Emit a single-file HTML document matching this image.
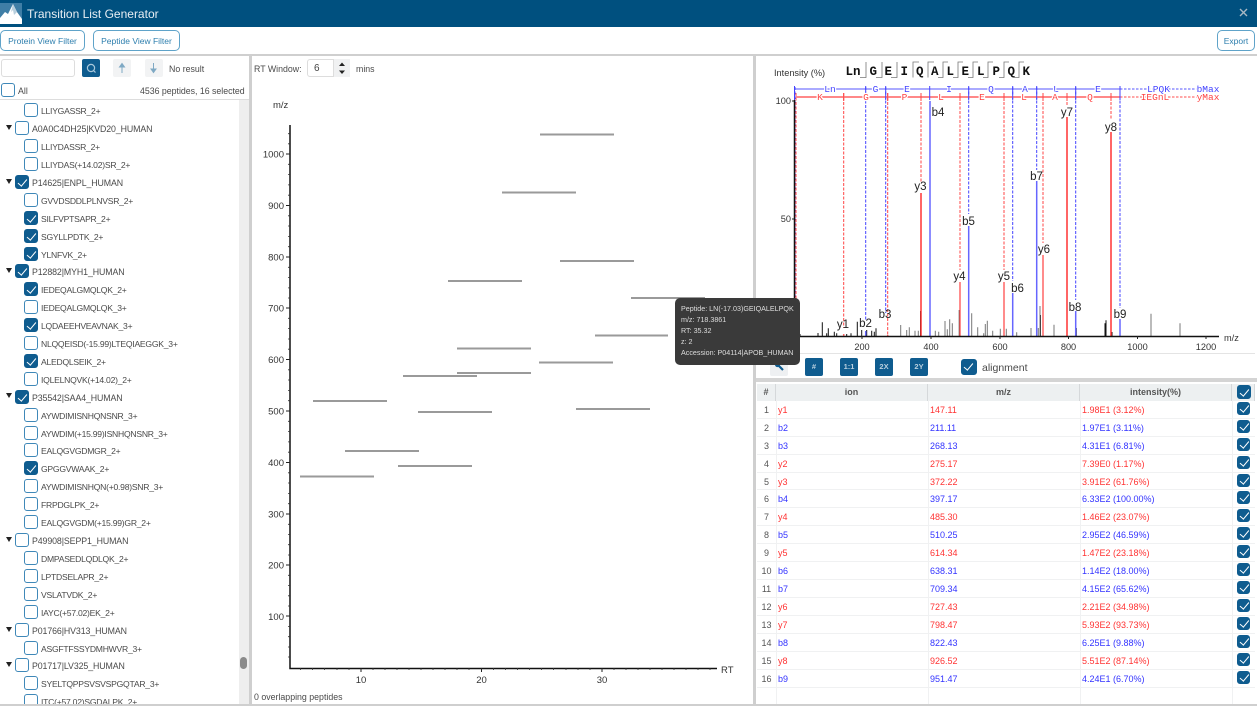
<!DOCTYPE html>
<html lang="en"><head><meta charset="utf-8"><title>Transition List Generator</title>
<style>
html,body{margin:0;padding:0;width:1257px;height:706px;overflow:hidden;background:#fff;font-family:"Liberation Sans",sans-serif;font-size:8.8px;color:#444}
#w{position:relative;width:1257px;height:706px;overflow:hidden}
div{box-sizing:border-box}
.a{position:absolute;white-space:nowrap}
.bar{left:0;top:0;width:1257px;height:27px;background:#00507f;color:#e8eef3;font-size:12px;line-height:28px;padding-left:27px;position:absolute}
.btn{position:absolute;top:30px;height:21px;border:1px solid #5fa3c9;border-radius:5px;color:#2e7fae;line-height:20px;text-align:center;background:#fff;font-size:8.5px}
.g{position:absolute;background:#cfcfcf}
.r{position:absolute;height:18px;line-height:20px;white-space:nowrap;color:#4a4a4a}
.p{left:32px;font-size:8.8px;letter-spacing:-.1px}.s{left:41px;font-size:8.6px;letter-spacing:-.25px}
.c{position:absolute;width:14px;height:14px;border:1px solid #3f88b8;border-radius:3px;background:#fff}
.k{background:#0f5c8f;border-color:#0f5c8f}
.k:after{content:"";position:absolute;left:4px;top:0.5px;width:3.5px;height:8px;border:solid #fff;border-width:0 1.5px 1.5px 0;transform:rotate(40deg)}
.cp{left:15px}.cs{left:24px}
.t{position:absolute;left:6px;width:0;height:0;border-left:3px solid transparent;border-right:3px solid transparent;border-top:5px solid #222}
.ib{position:absolute;top:358px;width:18px;height:18px;background:#0f5c8f;border-radius:2px;color:#b9d0df;font-size:7.5px;font-weight:bold;line-height:18px;text-align:center}
.th{position:absolute;top:384px;height:17px;background:#edf0f1;border-right:1px solid #d5d8da;text-align:center;line-height:17px;color:#555;font-weight:bold;font-size:9px}
.n,.i,.m,.v{position:absolute;height:18px;line-height:20px;white-space:nowrap;font-size:9px}
.n{left:757px;width:19px;text-align:center;color:#555}
.i{left:778px}.m{left:930px}.v{left:1082px}
.R{color:#f33}.B{color:#33f}
.l{position:absolute;left:757px;width:498px;height:1px;background:#f0f1f2}
.tc{left:1237px;width:13px;height:13px}
.tc.k:after{left:3.5px;top:0}
.tip{position:absolute;left:675px;top:298px;width:125px;height:67px;background:#3a3a3a;border-radius:5px;color:#ddd;font-size:7.15px;padding:6px 6px;line-height:11.1px;white-space:nowrap}
</style></head><body><div id="w">
<div class="bar">Transition List Generator</div>
<svg class="a" style="left:0;top:3px" width="22" height="21" viewBox="0 0 22 21"><rect width="22" height="21" fill="#3f7ea6"/><path d="M0 21V15L5 9 8 11 13 1 17 9 22 16V21Z" fill="#fff"/><path d="M13 1 11 9 13 7 14 12 17 9Z" fill="#b9cfdd"/></svg>
<svg class="a" style="left:1239px;top:8px" width="9" height="9"><path d="M1 1 8 8M8 1 1 8" stroke="#a9b9c4" stroke-width="1.4"/></svg>
<div class="btn" style="left:0;width:85px">Protein View Filter</div>
<div class="btn" style="left:93px;width:87px">Peptide View Filter</div>
<div class="btn" style="left:1217px;width:38px">Export</div>

<div class="g" style="left:0;top:54px;width:1257px;height:2px"></div>
<div class="g" style="left:249px;top:56px;width:3px;height:648px"></div>
<div class="g" style="left:753px;top:56px;width:3px;height:648px"></div>
<div class="g" style="left:756px;top:378px;width:501px;height:4px;background:#d4d4d4"></div>

<!-- left header -->
<div class="a" style="left:1px;top:59px;width:74px;height:18px;border:1px solid #ddd;border-radius:3px"></div>
<div class="a" style="left:82px;top:59px;width:18px;height:18px;background:#0f5c8f;border-radius:2px"></div>
<svg class="a" style="left:85px;top:62px" width="12" height="12"><circle cx="6" cy="6" r="3.6" fill="none" stroke="#a9c8dc" stroke-width="1.2"/><path d="M8.6 8.6 10.5 10.5" stroke="#a9c8dc" stroke-width="1.2"/></svg>
<div class="a" style="left:113px;top:59px;width:18px;height:18px;background:#f2f3f4;border-radius:2px"></div>
<div class="a" style="left:145px;top:59px;width:18px;height:18px;background:#f2f3f4;border-radius:2px"></div>
<svg class="a" style="left:113px;top:59px" width="50" height="18"><path d="M9 14V6M6.5 8 9 4.5 11.500 8Z" stroke="#7fa9c4" fill="#7fa9c4"/><path d="M40.500 4V12M38 10 40.500 13.500 43 10Z" stroke="#7fa9c4" fill="#7fa9c4"/></svg>
<div class="r" style="left:169px;top:59px">No result</div>
<div class="c" style="left:1px;top:83px"></div>
<div class="r" style="left:18px;top:81px">All</div>
<div class="r" style="left:140px;top:81px;font-size:8.8px;letter-spacing:-.02px">4536 peptides, 16 selected</div>
<div class="g" style="left:0;top:99px;width:249px;height:1px;background:#ddd"></div>
<div class="a" style="left:239px;top:100px;width:10px;height:604px;background:#eeeeee"></div>
<div class="a" style="left:240px;top:657px;width:7px;height:12px;background:#8a8a8a;border-radius:4px"></div>

<!-- tree -->
<div class="a" style="left:0;top:100px;width:239px;height:604px;overflow:hidden">
<div style="position:absolute;left:0;top:-100px;width:239px;height:804px">
<div class="c cs" style="top:103px"></div><div class="r s" style="top:101px">LLIYGASSR_2+</div>
<div class="t" style="top:125px"></div><div class="c cp" style="top:121px"></div><div class="r p" style="top:119px">A0A0C4DH25|KVD20_HUMAN</div>
<div class="c cs" style="top:139px"></div><div class="r s" style="top:137px">LLIYDASSR_2+</div>
<div class="c cs" style="top:157px"></div><div class="r s" style="top:155px">LLIYDAS(+14.02)SR_2+</div>
<div class="t" style="top:179px"></div><div class="c cp k" style="top:175px"></div><div class="r p" style="top:173px">P14625|ENPL_HUMAN</div>
<div class="c cs" style="top:193px"></div><div class="r s" style="top:191px">GVVDSDDLPLNVSR_2+</div>
<div class="c cs k" style="top:211px"></div><div class="r s" style="top:209px">SILFVPTSAPR_2+</div>
<div class="c cs k" style="top:229px"></div><div class="r s" style="top:227px">SGYLLPDTK_2+</div>
<div class="c cs k" style="top:247px"></div><div class="r s" style="top:245px">YLNFVK_2+</div>
<div class="t" style="top:268px"></div><div class="c cp k" style="top:264px"></div><div class="r p" style="top:262px">P12882|MYH1_HUMAN</div>
<div class="c cs k" style="top:282px"></div><div class="r s" style="top:280px">IEDEQALGMQLQK_2+</div>
<div class="c cs" style="top:300px"></div><div class="r s" style="top:298px">IEDEQALGMQLQK_3+</div>
<div class="c cs k" style="top:318px"></div><div class="r s" style="top:316px">LQDAEEHVEAVNAK_3+</div>
<div class="c cs" style="top:336px"></div><div class="r s" style="top:334px">NLQQEISD(-15.99)LTEQIAEGGK_3+</div>
<div class="c cs k" style="top:354px"></div><div class="r s" style="top:352px">ALEDQLSEIK_2+</div>
<div class="c cs" style="top:372px"></div><div class="r s" style="top:370px">IQLELNQVK(+14.02)_2+</div>
<div class="t" style="top:393px"></div><div class="c cp k" style="top:390px"></div><div class="r p" style="top:388px">P35542|SAA4_HUMAN</div>
<div class="c cs" style="top:408px"></div><div class="r s" style="top:406px">AYWDIMISNHQNSNR_3+</div>
<div class="c cs" style="top:426px"></div><div class="r s" style="top:424px">AYWDIM(+15.99)ISNHQNSNR_3+</div>
<div class="c cs" style="top:443px"></div><div class="r s" style="top:441px">EALQGVGDMGR_2+</div>
<div class="c cs k" style="top:461px"></div><div class="r s" style="top:459px">GPGGVWAAK_2+</div>
<div class="c cs" style="top:479px"></div><div class="r s" style="top:477px">AYWDIMISNHQN(+0.98)SNR_3+</div>
<div class="c cs" style="top:497px"></div><div class="r s" style="top:495px">FRPDGLPK_2+</div>
<div class="c cs" style="top:515px"></div><div class="r s" style="top:513px">EALQGVGDM(+15.99)GR_2+</div>
<div class="t" style="top:537px"></div><div class="c cp" style="top:533px"></div><div class="r p" style="top:531px">P49908|SEPP1_HUMAN</div>
<div class="c cs" style="top:551px"></div><div class="r s" style="top:549px">DMPASEDLQDLQK_2+</div>
<div class="c cs" style="top:569px"></div><div class="r s" style="top:567px">LPTDSELAPR_2+</div>
<div class="c cs" style="top:587px"></div><div class="r s" style="top:585px">VSLATVDK_2+</div>
<div class="c cs" style="top:605px"></div><div class="r s" style="top:603px">IAYC(+57.02)EK_2+</div>
<div class="t" style="top:627px"></div><div class="c cp" style="top:623px"></div><div class="r p" style="top:621px">P01766|HV313_HUMAN</div>
<div class="c cs" style="top:641px"></div><div class="r s" style="top:639px">ASGFTFSSYDMHWVR_3+</div>
<div class="t" style="top:662px"></div><div class="c cp" style="top:658px"></div><div class="r p" style="top:656px">P01717|LV325_HUMAN</div>
<div class="c cs" style="top:676px"></div><div class="r s" style="top:674px">SYELTQPPSVSVSPGQTAR_3+</div>
<div class="c cs" style="top:694px"></div><div class="r s" style="top:692px">ITC(+57.02)SGDALPK_2+</div>
</div></div>
<div class="g" style="left:0;top:704px;width:1257px;height:2px"></div>

<!-- RT window -->
<div class="r" style="left:254px;top:59px">RT Window:</div>
<div class="a" style="left:307px;top:59px;width:27px;height:18px;border:1px solid #ddd;border-radius:3px 0 0 3px;line-height:17px;padding-left:6px;font-size:10px">6</div>
<div class="a" style="left:334px;top:59px;width:16px;height:18px;background:#f0f1f2"></div>
<svg class="a" style="left:334px;top:59px" width="16" height="18"><path d="M5 7 8 3.500 11 7Z M5 11.500 8 15 11 11.500Z" fill="#222"/></svg>
<div class="r" style="left:356px;top:59px">mins</div>
<div class="r" style="left:254px;top:687px">0 overlapping peptides</div>

<!-- charts -->
<svg class="a" style="left:0;top:0" width="1257" height="706" font-family="Liberation Sans, sans-serif">
<!-- scatter -->
<g font-size="9.5" fill="#333">
<text x="273" y="108">m/z</text><text x="721" y="673">RT</text>
<g text-anchor="end"><text x="284" y="157.500">1000</text><text x="284" y="209">900</text><text x="284" y="260.500">800</text><text x="284" y="311.500">700</text><text x="284" y="363">600</text><text x="284" y="414.500">500</text><text x="284" y="466">400</text><text x="284" y="517.500">300</text><text x="284" y="568.500">200</text><text x="284" y="620">100</text></g>
<g text-anchor="middle"><text x="361" y="683">10</text><text x="481.500" y="683">20</text><text x="602" y="683">30</text></g>
</g>
<path d="M290 125V668.500H717" fill="none" stroke="#111" stroke-width="1.500"/>
<path d="M286 154h4M286 205.500h4M286 257h4M286 308h4M286 359.500h4M286 411h4M286 462.500h4M286 514h4M286 565h4M286 616h4M361 668v4M481.500 668v4M602 668v4" stroke="#222" stroke-width="1"/>
<path d="M288 133.700h2M288 143.800h2M288 164.300h2M288 174.600h2M288 184.900h2M288 195.200h2M288 215.800h2M288 226h2M288 236.400h2M288 246.700h2M288 267.300h2M288 277.600h2M288 287.900h2M288 298h2M288 318.300h2M288 328.600h2M288 339h2M288 349.200h2M288 369.800h2M288 380h2M288 390.400h2M288 400.700h2M288 421.300h2M288 431.600h2M288 441.900h2M288 452.200h2M288 472.800h2M288 483h2M288 493.400h2M288 503.700h2M288 524.300h2M288 534.500h2M288 544.700h2M288 555h2M288 575.300h2M288 585.600h2M288 595.800h2M288 606h2M288 626.400h2M288 636.700h2M288 647h2M288 657h2M300.500 668v2M324.500 668v2M337 668v2M349 668v2M373 668v2M385 668v2M397 668v2M409 668v2M421 668v2M433 668v2M445 668v2M457 668v2M469 668v2M493.500 668v2M505.500 668v2M517.500 668v2M529.500 668v2M541.500 668v2M553.500 668v2M566 668v2M578 668v2M590 668v2M614 668v2M626 668v2M638 668v2M650 668v2M662 668v2M674 668v2M686 668v2M698 668v2M710 668v2M312.500 668v2" stroke="#333" stroke-width="0.800"/>
<path d="M540 134.500h74M502 192.500h74M560 261h74M448 281h74M631 298h74M595 335.500h73M457 348.500h74M539 362.500h74M403 376h74M457 373h74M313 401h74M418 412h74M576 409h74M345 451h74M398 466h74M300 476.500h74" stroke="#9a9a9a" stroke-width="2"/>

<!-- spectrum -->
<g font-size="9.2" fill="#333"><text x="774" y="76">Intensity (%)</text><text x="1224" y="341">m/z</text>
<g text-anchor="end"><text x="791" y="104">100</text><text x="791" y="222">50</text></g>
<g text-anchor="middle"><text x="862" y="350">200</text><text x="931" y="350">400</text><text x="1000" y="350">600</text><text x="1068.500" y="350">800</text><text x="1137.500" y="350">1000</text><text x="1206" y="350">1200</text></g></g>
<!-- sequence -->
<g font-family="Liberation Mono, monospace" font-weight="bold" font-size="12.500" fill="#111"><text x="845.500" y="75">Ln</text><text x="869.500" y="75">G</text><text x="884.500" y="75">E</text><text x="900.500" y="75">I</text><text x="916" y="75">Q</text><text x="931" y="75">A</text><text x="946.500" y="75">L</text><text x="961.500" y="75">E</text><text x="977" y="75">L</text><text x="992.500" y="75">P</text><text x="1007.500" y="75">Q</text><text x="1022.500" y="75">K</text></g>
<path d="M860 77.500h6V62M876 77.500h6V62M891 77.500h6V62M913 77.500V62h6M928 77.500V62h6M938 77.500h5V62h5M953 77.500h5V62h5M968 77.500h5V62h5M983 77.500h5V62h5M999 77.500h5V62h5M1014 77.500h5V62h5" fill="none" stroke="#777" stroke-width="0.800"/>
<!-- noise -->
<path d="M822.300 336V322.300M828.300 336V328.300M826.700 336V333.300M834.300 336V331.700M836.700 336V333.300M846.700 336V334M851 336V333.300M857.300 336V321.700M861.700 336V330M866.700 336V330M871.700 336V330.700M874.300 336V331.700M876 336V328.300M920.500 336V311M959.300 336V310M1040.500 336V315M1076.300 336V328M1105 336V323.300M1106 336V320.300M1112 336V332M800 336V334M818 336V333" stroke="#111" stroke-width="1"/>
<path d="M900.700 336V325M906.700 336V330M909.300 336V327.300M915 336V330.700M918.300 336V330.700M935.300 336V330.700M938.700 336V331.700M945 336V321M947.300 336V329.300M949.700 336V319.300M952.300 336V323.300M971.700 336V313.300M977.700 336V327.300M983.700 336V333.300M985.300 336V324M987.300 336V320.700M992.700 336V330.700M1000.300 336V328.700M1006.300 336V328.700M1016.700 336V332.300M1031 336V328M1038.300 336V328M1040 336V306M1054 336V324.700M1151 336V313.700M1180 336V323.300" stroke="#777" stroke-width="1"/>
<!-- dashed ion lines -->
<g fill="none" stroke-width="1" stroke-dasharray="3 1.500">
<g stroke="#f44"><path d="M796 93V336M843.700 93V328M887.700 93V336M921 93V182M960 93V270M1004 93V270M1043 93V243M1067 93V105M1111 93V120"/></g>
<g stroke="#44f"><path d="M795 87V336M865.700 87V321M885.700 87V313M968.700 87V214M1012.700 87V281M1036.700 87V170M1075.700 87V300M1120 87V308"/></g>
</g>
<!-- ladder -->
<path d="M794 89H1120" stroke="#55f" stroke-width="1"/>
<path d="M796 97H1120" stroke="#f88" stroke-width="2"/>
<path d="M1120 89H1197" stroke="#55f" stroke-width="1" stroke-dasharray="2.500 1.500"/>
<path d="M1120 97H1197" stroke="#f88" stroke-width="1.500" stroke-dasharray="2.500 1.500"/>
<path d="M794.500 86V100M865.700 86V100M885.700 86V100M929.700 86V100M968.700 86V100M1012.700 86V100M1036.700 86V100M1075.700 86V100M1120 86V100" stroke="#44f" stroke-width="1" fill="none"/>
<path d="M843.700 93V101M887.700 93V101M921 93V101M960 93V101M1004 93V101M1043 93V101M1067 93V101M1111 93V101" stroke="#f44" stroke-width="1" fill="none"/>
<g font-family="Liberation Mono, monospace" font-size="9.500" text-anchor="middle" paint-order="stroke" stroke="#fff" stroke-width="2.500">
<g fill="#44f"><text x="830" y="92">Ln</text><text x="875.500" y="92">G</text><text x="907" y="92">E</text><text x="949" y="92">I</text><text x="991" y="92">Q</text><text x="1025" y="92">A</text><text x="1056" y="92">L</text><text x="1098" y="92">E</text><text x="1158.500" y="92">LPQK</text><text x="1208" y="92">bMax</text></g>
<g fill="#f44"><text x="820" y="100">K</text><text x="866" y="100">G</text><text x="904.500" y="100">P</text><text x="941" y="100">L</text><text x="982" y="100">E</text><text x="1024" y="100">L</text><text x="1055" y="100">A</text><text x="1090" y="100">Q</text><text x="1155" y="100">IEGnL</text><text x="1208" y="100">yMax</text></g>
</g>
<!-- solid ions -->
<g fill="none" stroke-width="1.500">
<g stroke="#f33"><path d="M921 193V336M1067 117V336M1111 132V336"/></g>
<g stroke="#f66"><path d="M843.700 334V336M887.700 335V336M960 282V336M1004 282V336M1043 255V336"/></g>
<g stroke="#66f"><path d="M930 101V336M968.700 226V336M1012.700 293V336M1036.700 181V336M1075.700 311V336M1120 319V336M865.700 331V336"/></g>
</g>
<path d="M794.500 100V336.500H1219" fill="none" stroke="#111" stroke-width="1.500"/>
<path d="M792 101h2M792 219h2M862 336v3M931 336v3M1000 336v3M1068.500 336v3M1137.500 336v3M1206 336v3" stroke="#222" stroke-width="1"/>
<g font-size="11.500" fill="#222" text-anchor="middle">
<text x="843" y="328">y1</text><text x="865.500" y="327">b2</text><text x="885" y="318">b3</text><text x="920.500" y="190">y3</text><text x="938" y="116">b4</text><text x="959.500" y="280">y4</text><text x="968.500" y="225">b5</text><text x="1004" y="280">y5</text><text x="1017.500" y="292">b6</text><text x="1036.500" y="180">b7</text><text x="1044" y="253">y6</text><text x="1067" y="116">y7</text><text x="1075" y="311">b8</text><text x="1111" y="131">y8</text><text x="1120" y="318">b9</text>
</g>
</svg>

<!-- spectrum toolbar -->
<div class="g" style="left:756px;top:353px;width:499px;height:1px;background:#e4e4e4"></div>
<div class="a" style="left:770px;top:358px;width:18px;height:18px;background:#eef0f2;border-radius:2px"></div>
<svg class="a" style="left:774px;top:361px" width="11" height="11"><circle cx="3.500" cy="3.500" r="2.600" fill="#0f5c8f"/><path d="M3.500 3.500 9 9" stroke="#0f5c8f" stroke-width="2.200"/></svg>
<div class="ib" style="left:805px">#</div>
<div class="ib" style="left:840px">1:1</div>
<div class="ib" style="left:875px">2X</div>
<div class="ib" style="left:910px">2Y</div>
<div class="c k" style="left:961px;top:359px;width:16px;height:16px"></div>
<div class="r" style="left:982px;top:358px;font-size:10.500px">alignment</div>

<!-- table -->
<div class="th" style="left:757px;width:19px">#</div>
<div class="th" style="left:776px;width:152px">ion</div>
<div class="th" style="left:928px;width:152px">m/z</div>
<div class="th" style="left:1080px;width:152px">intensity(%)</div>
<div class="th" style="left:1232px;width:23px"></div>
<div class="c k" style="left:1237px;top:385px"></div>
<div class="a" style="left:776px;top:400px;width:1px;height:304px;background:#f0f1f2"></div>
<div class="a" style="left:928px;top:400px;width:1px;height:304px;background:#f0f1f2"></div>
<div class="a" style="left:1080px;top:400px;width:1px;height:304px;background:#f0f1f2"></div>
<div class="a" style="left:1232px;top:400px;width:1px;height:304px;background:#f0f1f2"></div>

<div class="n" style="top:400px">1</div><div class="i R" style="top:400px">y1</div><div class="m R" style="top:400px">147.11</div><div class="v R" style="top:400px">1.98E1 (3.12%)</div><div class="c k tc" style="top:402px"></div><div class="l" style="top:418px"></div>
<div class="n" style="top:418px">2</div><div class="i B" style="top:418px">b2</div><div class="m B" style="top:418px">211.11</div><div class="v B" style="top:418px">1.97E1 (3.11%)</div><div class="c k tc" style="top:420px"></div><div class="l" style="top:436px"></div>
<div class="n" style="top:436px">3</div><div class="i B" style="top:436px">b3</div><div class="m B" style="top:436px">268.13</div><div class="v B" style="top:436px">4.31E1 (6.81%)</div><div class="c k tc" style="top:438px"></div><div class="l" style="top:454px"></div>
<div class="n" style="top:454px">4</div><div class="i R" style="top:454px">y2</div><div class="m R" style="top:454px">275.17</div><div class="v R" style="top:454px">7.39E0 (1.17%)</div><div class="c k tc" style="top:456px"></div><div class="l" style="top:472px"></div>
<div class="n" style="top:472px">5</div><div class="i R" style="top:472px">y3</div><div class="m R" style="top:472px">372.22</div><div class="v R" style="top:472px">3.91E2 (61.76%)</div><div class="c k tc" style="top:474px"></div><div class="l" style="top:489px"></div>
<div class="n" style="top:489px">6</div><div class="i B" style="top:489px">b4</div><div class="m B" style="top:489px">397.17</div><div class="v B" style="top:489px">6.33E2 (100.00%)</div><div class="c k tc" style="top:491px"></div><div class="l" style="top:507px"></div>
<div class="n" style="top:507px">7</div><div class="i R" style="top:507px">y4</div><div class="m R" style="top:507px">485.30</div><div class="v R" style="top:507px">1.46E2 (23.07%)</div><div class="c k tc" style="top:509px"></div><div class="l" style="top:525px"></div>
<div class="n" style="top:525px">8</div><div class="i B" style="top:525px">b5</div><div class="m B" style="top:525px">510.25</div><div class="v B" style="top:525px">2.95E2 (46.59%)</div><div class="c k tc" style="top:527px"></div><div class="l" style="top:543px"></div>
<div class="n" style="top:543px">9</div><div class="i R" style="top:543px">y5</div><div class="m R" style="top:543px">614.34</div><div class="v R" style="top:543px">1.47E2 (23.18%)</div><div class="c k tc" style="top:545px"></div><div class="l" style="top:561px"></div>
<div class="n" style="top:561px">10</div><div class="i B" style="top:561px">b6</div><div class="m B" style="top:561px">638.31</div><div class="v B" style="top:561px">1.14E2 (18.00%)</div><div class="c k tc" style="top:563px"></div><div class="l" style="top:579px"></div>
<div class="n" style="top:579px">11</div><div class="i B" style="top:579px">b7</div><div class="m B" style="top:579px">709.34</div><div class="v B" style="top:579px">4.15E2 (65.62%)</div><div class="c k tc" style="top:581px"></div><div class="l" style="top:597px"></div>
<div class="n" style="top:597px">12</div><div class="i R" style="top:597px">y6</div><div class="m R" style="top:597px">727.43</div><div class="v R" style="top:597px">2.21E2 (34.98%)</div><div class="c k tc" style="top:599px"></div><div class="l" style="top:615px"></div>
<div class="n" style="top:615px">13</div><div class="i R" style="top:615px">y7</div><div class="m R" style="top:615px">798.47</div><div class="v R" style="top:615px">5.93E2 (93.73%)</div><div class="c k tc" style="top:617px"></div><div class="l" style="top:633px"></div>
<div class="n" style="top:633px">14</div><div class="i B" style="top:633px">b8</div><div class="m B" style="top:633px">822.43</div><div class="v B" style="top:633px">6.25E1 (9.88%)</div><div class="c k tc" style="top:635px"></div><div class="l" style="top:651px"></div>
<div class="n" style="top:651px">15</div><div class="i R" style="top:651px">y8</div><div class="m R" style="top:651px">926.52</div><div class="v R" style="top:651px">5.51E2 (87.14%)</div><div class="c k tc" style="top:653px"></div><div class="l" style="top:669px"></div>
<div class="n" style="top:669px">16</div><div class="i B" style="top:669px">b9</div><div class="m B" style="top:669px">951.47</div><div class="v B" style="top:669px">4.24E1 (6.70%)</div><div class="c k tc" style="top:671px"></div><div class="l" style="top:687px"></div>

<!-- tooltip -->
<div class="tip">Peptide: LN(-17.03)GEIQALELPQK<br>m/z: 718.3861<br>RT: 35.32<br>z: 2<br>Accession: P04114|APOB_HUMAN</div>
</div></body></html>
